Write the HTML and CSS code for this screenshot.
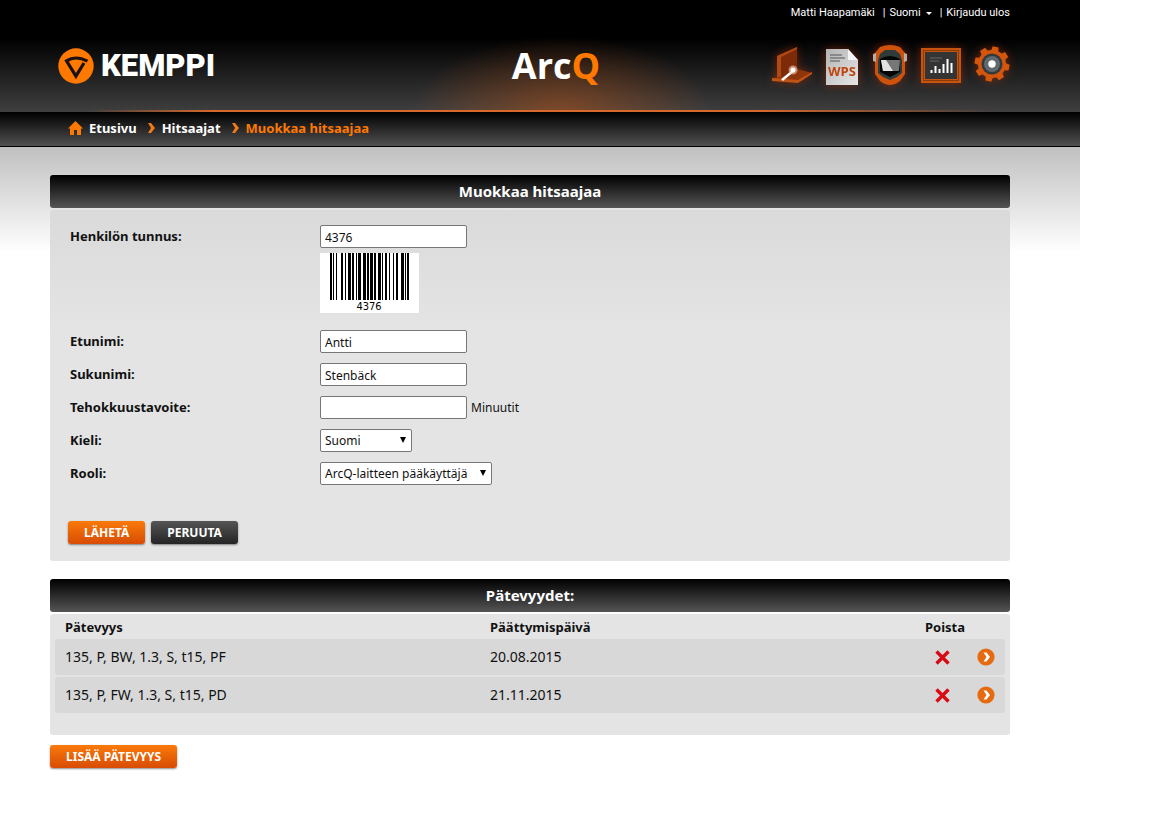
FILE: index.html
```
<!DOCTYPE html>
<html lang="fi">
<head>
<meta charset="utf-8">
<title>ArcQ – Muokkaa hitsaajaa</title>
<link rel="stylesheet" href="styles.css">
</head>
<body>
<div class="page">
  <header class="header">
    <div class="userbar">
      <span>Matti Haapamäki</span>
      <span class="sep">|</span>
      <button class="lang" type="button">Suomi <span class="caret"></span></button>
      <span class="sep">|</span>
      <a href="#">Kirjaudu ulos</a>
    </div>
    <div class="masthead">
      <a class="brand" href="#">
        <svg width="36" height="36" viewBox="0 0 36 36" aria-hidden="true">
          <circle cx="18" cy="18" r="17.7" fill="#ff7800"/>
          <path d="M29.500 13.200C22 9.300 14 9.300 8.500 12.800L17.900 28.200L26 15" fill="none" stroke="#1a1210" stroke-width="3.200"/>
        </svg>
        <span class="brand-name">KEMPPI</span>
      </a>
      <div class="product">Arc<span class="product-q">Q</span></div>
      <nav class="tools" aria-label="Päävalikko">
        <a href="#" aria-label="Hitsaus">
          <svg width="40" height="44" viewBox="0 0 40 44">
            <path d="M5 12L25 3V32L5 36Z" fill="#7c2a08"/>
            <path d="M5 12L23 4L25 3V5L9 13V35L5 36Z" fill="#b04a14"/>
            <path d="M25 25L40 29L26 38L0 36V34L25 30Z" fill="#8e350c"/>
            <path d="M0 34L26 36L40 28V30L26 39L0 37Z" fill="#c05414"/>
            <path d="M10 36L21 27" stroke="#fff" stroke-width="2.500"/>
            <circle cx="21" cy="26" r="4.500" fill="#ffd0b0" opacity=".6"/>
            <circle cx="21" cy="26" r="2.500" fill="#fff"/>
          </svg>
        </a>
        <a href="#" aria-label="WPS">
          <svg width="34" height="44" viewBox="0 0 34 44">
            <defs><linearGradient id="sheet" x1="0" y1="0" x2="1" y2="1"><stop offset="0" stop-color="#b4b4b4"/><stop offset="1" stop-color="#e6e6e6"/></linearGradient></defs>
            <path d="M1 5H23L33 16V41H1Z" fill="url(#sheet)"/>
            <path d="M23 5L33 16H23Z" fill="#f4f4f4"/>
            <path d="M5 11H17M5 14H20M5 17H15" stroke="#555" stroke-width="1.200"/>
            <text x="17" y="32" text-anchor="middle" class="wps">WPS</text>
          </svg>
        </a>
        <a href="#" aria-label="Hitsaajat">
          <svg width="36" height="44" viewBox="0 0 36 44">
            <path d="M8 3Q18 -1 28 3L33 9V30L28 37Q18 45 8 37L3 30V9Z" fill="#cf520c"/>
            <path d="M1 10L4 9V18L1 17ZM32 9L35 10V17L32 18Z" fill="#b9aca4"/>
            <path d="M8 10L13 6H23L28 10L30 16V29L25 33L18 36L11 33L6 29V16Z" fill="#2e3b38"/>
            <path d="M8 15Q18 9 28 15L28 28L18 33L8 28Z" fill="#050505"/>
            <path d="M9 16H28L27 27H11Z" fill="#777"/>
            <path d="M9 16H14L21 27H11Z" fill="#e2e2e2"/>
          </svg>
        </a>
        <a href="#" aria-label="Raportit">
          <svg width="40" height="44" viewBox="0 0 40 44">
            <rect x="2" y="6" width="36" height="31" fill="#343434" stroke="#c6540e" stroke-width="4"/>
            <rect x="2.500" y="6.500" width="35" height="30" fill="none" stroke="#8a3c08"/>
            <path d="M9 14H21M9 17H18" stroke="#666"/>
            <path d="M10.500 29V26M14.500 29V22M18.500 29V25M22.500 29V20M26.500 29V15M30.500 29V19" stroke="#fff" stroke-width="2"/>
          </svg>
        </a>
        <a href="#" aria-label="Asetukset">
          <svg width="36" height="44" viewBox="0 0 36 44">
            <g transform="translate(18 20)">
              <g fill="#d2560c">
                <path d="M-3 -17.500H3L4 -11H-4ZM-3 17.500H3L4 11H-4ZM-17.500 -3V3L-11 4V-4ZM17.500 -3V3L11 4V-4Z" transform="rotate(12)"/>
                <path d="M-3 -17.500H3L4 -11H-4ZM-3 17.500H3L4 11H-4ZM-17.500 -3V3L-11 4V-4ZM17.500 -3V3L11 4V-4Z" transform="rotate(57)"/>
                <circle r="14"/>
              </g>
              <circle r="10.500" fill="#34393c"/>
              <circle r="8" fill="#5e6a70"/>
              <circle r="3.700" fill="#fff"/>
            </g>
          </svg>
        </a>
      </nav>
    </div>
  </header>

  <nav class="crumbs" aria-label="Murupolku">
    <a class="home" href="#">
      <svg width="15" height="14" viewBox="0 0 15 14" aria-hidden="true"><path d="M7.500 0L15 7.500H13V14H9V9H6V14H2V7.500H0Z" fill="#ff7800"/></svg>
      Etusivu
    </a>
    <svg width="8" height="12" viewBox="0 0 8 12" aria-hidden="true"><path d="M1 1H4L8 6L4 11H1L4 6Z" fill="#f07a1a"/></svg>
    <a href="#">Hitsaajat</a>
    <svg width="8" height="12" viewBox="0 0 8 12" aria-hidden="true"><path d="M1 1H4L8 6L4 11H1L4 6Z" fill="#f07a1a"/></svg>
    <span class="current" aria-current="page">Muokkaa hitsaajaa</span>
  </nav>

  <main class="content">
    <section class="panel">
      <h1 class="panel-title">Muokkaa hitsaajaa</h1>
      <form class="panel-body form">
        <div class="fields">
          <label for="tunnus">Henkilön tunnus:</label>
          <div class="id-cell">
            <input id="tunnus" type="text" value="4376">
            <svg class="barcode" width="99" height="60" viewBox="0 0 99 60" role="img" aria-label="Viivakoodi 4376">
              <rect width="99" height="60" fill="#fff"/>
              <path shape-rendering="crispEdges" d="M10 0h2v47h-2zM13 0h1v47h-1zM16 0h1v47h-1zM21 0h2v47h-2zM25 0h1v47h-1zM28 0h3v47h-3zM32 0h2v47h-2zM36 0h1v47h-1zM38 0h3v47h-3zM43 0h3v47h-3zM47 0h2v47h-2zM50 0h3v47h-3zM54 0h2v47h-2zM58 0h3v47h-3zM62 0h1v47h-1zM65 0h2v47h-2zM69 0h1v47h-1zM73 0h1v47h-1zM76 0h2v47h-2zM81 0h3v47h-3zM85 0h1v47h-1zM87 0h2v47h-2z"/>
              <text x="49" y="57" text-anchor="middle" class="barcode-text">4376</text>
            </svg>
          </div>
          <label for="etunimi">Etunimi:</label>
          <div><input id="etunimi" type="text" value="Antti"></div>
          <label for="sukunimi">Sukunimi:</label>
          <div><input id="sukunimi" type="text" value="Stenbäck"></div>
          <label for="tavoite">Tehokkuustavoite:</label>
          <div><input id="tavoite" type="text"><span class="unit">Minuutit</span></div>
          <label for="kieli">Kieli:</label>
          <div><span class="select"><select id="kieli" class="select-short"><option>Suomi</option></select></span></div>
          <label for="rooli">Rooli:</label>
          <div><span class="select"><select id="rooli" class="select-long"><option>ArcQ-laitteen pääkäyttäjä</option></select></span></div>
        </div>
        <div class="actions">
          <button class="btn" type="submit">LÄHETÄ</button>
          <button class="btn btn-dark" type="button">PERUUTA</button>
        </div>
      </form>
    </section>

    <section class="panel">
      <h2 class="panel-title">Pätevyydet:</h2>
      <div class="panel-body list">
        <table>
          <colgroup><col><col class="col-date"><col class="col-delete"><col class="col-open"></colgroup>
          <thead>
            <tr><th>Pätevyys</th><th>Päättymispäivä</th><th>Poista</th><td></td></tr>
          </thead>
          <tbody>
            <tr>
              <td>135, P, BW, 1.3, S, t15, PF</td><td>20.08.2015</td>
              <td class="icon-cell"><button class="icon-btn" type="button" aria-label="Poista"><svg width="15" height="15" viewBox="0 0 15 15"><path d="M1.500 1.500L13.500 13.500M13.500 1.500L1.500 13.500" stroke="#d80a14" stroke-width="3.400"/></svg></button></td>
              <td class="icon-cell"><a class="icon-btn" href="#" aria-label="Avaa"><svg width="18" height="18" viewBox="0 0 18 18"><circle cx="9" cy="9" r="8.600" fill="#e56a10"/><path d="M6.500 4.500H9.500L13 9L9.500 13.500H6.500L9.500 9Z" fill="#fff"/></svg></a></td>
            </tr>
            <tr>
              <td>135, P, FW, 1.3, S, t15, PD</td><td>21.11.2015</td>
              <td class="icon-cell"><button class="icon-btn" type="button" aria-label="Poista"><svg width="15" height="15" viewBox="0 0 15 15"><path d="M1.500 1.500L13.500 13.500M13.500 1.500L1.500 13.500" stroke="#d80a14" stroke-width="3.400"/></svg></button></td>
              <td class="icon-cell"><a class="icon-btn" href="#" aria-label="Avaa"><svg width="18" height="18" viewBox="0 0 18 18"><circle cx="9" cy="9" r="8.600" fill="#e56a10"/><path d="M6.500 4.500H9.500L13 9L9.500 13.500H6.500L9.500 9Z" fill="#fff"/></svg></a></td>
            </tr>
          </tbody>
        </table>
      </div>
    </section>
    <button class="btn add" type="button">LISÄÄ PÄTEVYYS</button>
  </main>
</div>
</body>
</html>
```
FILE: styles.css
```
* { box-sizing: border-box; }

body {
  margin: 0;
  background: #fff;
  color: #111;
  font: 13px/18px Tahoma, "Noto Sans", "Open Sans", sans-serif;
}

a { color: inherit; text-decoration: none; }
svg { display: block; }

button, input, select { font: inherit; color: inherit; margin: 0; }
button { cursor: pointer; }

.page { max-width: 1080px; }

/* Header */
.header {
  height: 112px;
  padding: 4px 70px 0 58px;
  color: #fff;
  background:
    linear-gradient(90deg, transparent 8%, #d8692c 20%, #d8692c 70%, transparent 92%) bottom / 100% 2px no-repeat,
    radial-gradient(ellipse 150px 76px at 52% 100%, rgba(190, 85, 20, .5), transparent),
    linear-gradient(#000 38px, #3f3f40);
}

.userbar {
  display: flex;
  justify-content: flex-end;
  align-items: center;
  gap: 4px;
  font-family: Tahoma, Roboto, sans-serif;
  font-size: 11px;
}
.sep { margin-left: 4px; }
.lang {
  display: flex;
  align-items: center;
  gap: 5px;
  padding: 0;
  border: 0;
  background: none;
}
.caret {
  border: 3px solid transparent;
  border-top-color: #fff;
  border-bottom: 0;
}

.masthead {
  display: grid;
  grid-template-columns: 1fr auto 1fr;
  align-items: center;
  margin-top: 22px;
}
.brand { display: flex; align-items: center; gap: 7px; }
.brand-name {
  font: 900 31px/44px Roboto, sans-serif;
}
.product {
  padding-left: 44px;
  font: bold 36px/44px "Open Sans", "Noto Sans", sans-serif;
}
.product-q { color: #ff7800; }
.tools { display: flex; justify-content: flex-end; gap: 13px; }
.tools a { filter: drop-shadow(0 0 4px rgba(200, 50, 0, .5)); }
.wps { font: bold 13px "Open Sans", sans-serif; fill: #c04410; }

/* Breadcrumb */
.crumbs {
  display: flex;
  align-items: center;
  gap: 7px;
  height: 35px;
  padding: 0 68px 2px;
  border-bottom: 1px solid #000;
  background: linear-gradient(#000, #505050);
  color: #fff;
  font-weight: bold;
}
.crumbs svg { margin-left: 3px; }
.home { display: flex; align-items: center; gap: 6px; }
.crumbs .home svg { margin-left: 0; }
.current { color: #ff7800; }

/* Panels */
.content {
  padding: 28px 70px 40px 50px;
  background: linear-gradient(#c0c0c0, #fff) top / 100% 105px no-repeat;
}
.panel { margin-bottom: 18px; }
.panel-title {
  margin: 0 0 2px;
  border-radius: 3px;
  background: linear-gradient(#000, #555);
  color: #fff;
  font-size: 15px;
  line-height: 33px;
  text-align: center;
}
.panel-body { border-radius: 3px; background: #e4e4e4; }

/* Form */
.form {
  padding: 15px 18px 17px;
  background: linear-gradient(#dadada, #e4e4e4 120px);
}
.fields {
  display: grid;
  grid-template-columns: 252px 1fr;
  row-gap: 10px;
}
.fields label { padding-left: 2px; line-height: 23px; font-weight: bold; }
.fields > div { display: flex; align-items: center; font-size: 12px; }
.fields > .id-cell {
  flex-direction: column;
  align-items: flex-start;
  gap: 5px;
  padding-bottom: 7px;
}
.fields input, .fields select {
  height: 23px;
  padding: 1px 4px 0;
  border: 1px solid #777;
  border-radius: 2px;
  background: #fff;
}
.fields input { width: 147px; }
.unit { margin-left: 4px; }
.select { position: relative; }
.select select { display: block; appearance: none; }
.select-short { width: 92px; }
.select-long { width: 172px; }
.select::after {
  content: "";
  position: absolute;
  top: 8px;
  right: 6px;
  border: 3px solid transparent;
  border-top: 6px solid #000;
  border-bottom: 0;
  pointer-events: none;
}
.barcode-text { font: 11px "DejaVu Sans Condensed", "DejaVu Sans", sans-serif; }

.actions { display: flex; gap: 6px; margin-top: 36px; }
.btn {
  height: 23px;
  padding: 0 16px;
  border: 0;
  border-radius: 3px;
  background: linear-gradient(#f97a0a, #d84c04);
  box-shadow: 0 1px 2px rgba(0, 0, 0, .45);
  color: #fff;
  font-size: 12px;
  font-weight: bold;
}
.btn-dark { background: linear-gradient(#555, #242424); }

/* Qualifications */
.list { padding: 0 5px 20px; }
table {
  width: 100%;
  table-layout: fixed;
  border-spacing: 0 2px;
}
.col-date { width: 435px; }
.col-delete { width: 52px; }
.col-open { width: 38px; }
th, td { padding: 0 10px; text-align: left; white-space: nowrap; }
th { height: 21px; }
th:nth-child(3) { padding-right: 0; }
tbody td { height: 36px; background: #d8d8d8; font-size: 14px; }
tbody td:first-child { border-radius: 3px 0 0 3px; }
tbody td:last-child { border-radius: 0 3px 3px 0; }
tbody .icon-cell { padding: 0 0 0 10px; }
tbody .icon-cell:nth-child(3) { padding-left: 20px; }
.icon-btn { display: block; padding: 0; border: 0; background: none; }

.content > .btn { display: block; margin-top: -8px; }
```
